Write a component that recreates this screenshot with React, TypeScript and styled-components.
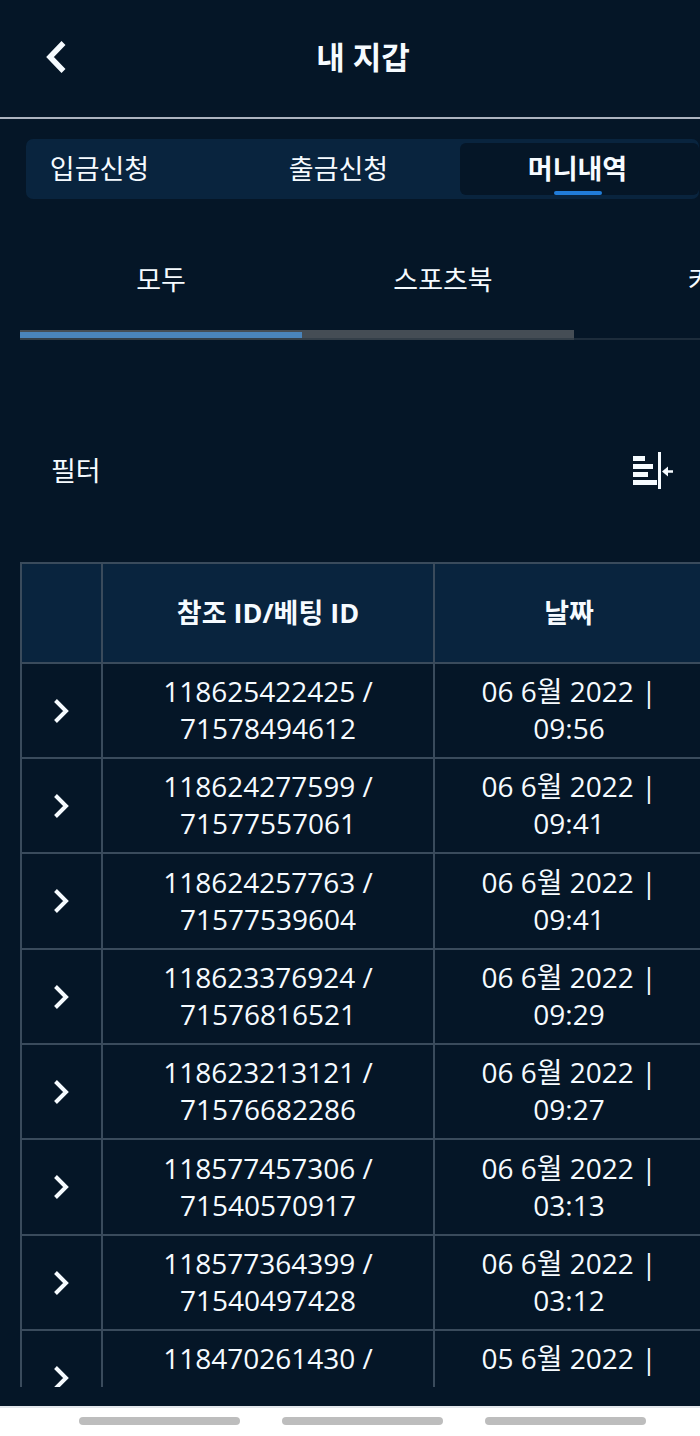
import React from "react";
import styled, { createGlobalStyle, css } from "styled-components";

const GlobalStyle = createGlobalStyle`
  * { box-sizing: border-box; }
  html, body, #root { height: 100%; }
  body {
    margin: 0;
    background: #051627;
    color: #f6fbff;
    font-family: "Open Sans", "Noto Sans CJK KR", sans-serif;
    font-size: 27px;
  }
  button { font: inherit; color: inherit; background: none; border: 0; padding: 0; }
`;

const Page = styled.div`
  height: 100vh;
  display: flex;
  flex-direction: column;
  overflow: hidden;
`;

const Header = styled.header`
  flex: none;
  display: grid;
  grid-template-columns: 1fr auto 1fr;
  align-items: center;
  height: 119px;
  padding: 0 20px 3px 46px;
  border-bottom: 2px solid #adb4c0;
`;

const BackButton = styled.button`
  display: flex;
  justify-self: start;
`;

const Title = styled.h1`
  margin: 0;
  font-size: 31px;
  line-height: 40px;
  font-weight: 700;
`;

const SegmentBar = styled.nav`
  flex: none;
  display: flex;
  justify-content: flex-end;
  height: 60px;
  margin: 20px 1px 0 26px;
  padding: 4px 0;
  border-radius: 7px;
  background: #09243e;
  overflow: hidden;
`;

const Segment = styled.button<{ $active?: boolean }>`
  flex: none;
  display: flex;
  flex-direction: column;
  align-items: center;
  justify-content: flex-end;
  width: 239px;
  padding-right: 4px;
  line-height: 40px;
  ${(p) =>
    p.$active &&
    css`
      font-weight: 700;
      border-radius: 6px;
      background: #051627;
    `}
`;

const Marker = styled.span<{ $active?: boolean }>`
  width: 48px;
  height: 4px;
  margin-top: 2px;
  border-radius: 2px;
  background: ${(p) => (p.$active ? "#217cd8" : "transparent")};
`;

const FilterTabs = styled.nav`
  flex: none;
  display: flex;
  height: 141px;
  margin-left: 20px;
  border-bottom: 2px solid #1d2c3b;
  overflow: hidden;
`;

const FilterTab = styled.button`
  flex: 0 0 282px;
  padding-top: 22px;
  line-height: 40px;
`;

const ScrollTrack = styled.div`
  flex: none;
  display: flex;
  width: 554px;
  height: 10px;
  margin: -10px 0 0 20px;
  border-top: 2px solid #454d55;
  border-bottom: 2px solid #343f49;
  background: #454d55;
`;

const ScrollFill = styled.div`
  width: 282px;
  background: #4a84bb;
`;

const FilterRow = styled.div`
  flex: none;
  display: flex;
  align-items: center;
  justify-content: space-between;
  height: 60px;
  margin: 101px 27px 0 51px;
`;

const FilterLabel = styled.span`
  line-height: 40px;
`;

const IconButton = styled.button`
  display: flex;
`;

const TableArea = styled.main`
  flex: 1;
  min-height: 0;
  margin: 61px 0 19px 20px;
  overflow: hidden;
`;

const Table = styled.table`
  width: 100%;
  min-width: 683px;
  table-layout: fixed;
  border-collapse: separate;
  border-spacing: 0;
  border-top: 2px solid #3a4b5c;
  border-left: 2px solid #3a4b5c;
`;

const Col = styled.col<{ $width?: number }>`
  ${(p) => p.$width && `width: ${p.$width}px;`}
`;

const HeadCell = styled.th<{ $last?: boolean }>`
  height: 100px;
  padding: 0 0 2px;
  line-height: 37px;
  font-weight: 700;
  background: #09243e;
  border-bottom: 2px solid #3a4b5c;
  border-right: ${(p) => (p.$last ? 0 : 2)}px solid #3a4b5c;
`;

const Row = styled.tr`
  height: 95px;
  &:nth-child(3n) {
    height: 96px;
  }
`;

const Cell = styled.td<{ $last?: boolean }>`
  padding: 0;
  font-size: 28px;
  line-height: 37px;
  text-align: center;
  border-bottom: 2px solid #3a4b5c;
  border-right: ${(p) => (p.$last ? 0 : 2)}px solid #3a4b5c;
`;

const Lines = styled.div`
  min-height: 74px;
  margin-bottom: 1px;
`;

const ExpandButton = styled.button`
  display: flex;
  margin: 0 auto;
`;

const SystemNav = styled.footer`
  flex: none;
  display: flex;
  justify-content: center;
  gap: 42px;
  height: 30px;
  padding: 9px 0 0 25px;
  border-top: 2px solid #e4e8ec;
  background: #ffffff;
`;

const NavPill = styled.div`
  width: 161px;
  height: 8px;
  border-radius: 4px;
  background: #bdbdbd;
`;

const rows = [
  ["118625422425", "71578494612", "06 6월 2022", "09:56"],
  ["118624277599", "71577557061", "06 6월 2022", "09:41"],
  ["118624257763", "71577539604", "06 6월 2022", "09:41"],
  ["118623376924", "71576816521", "06 6월 2022", "09:29"],
  ["118623213121", "71576682286", "06 6월 2022", "09:27"],
  ["118577457306", "71540570917", "06 6월 2022", "03:13"],
  ["118577364399", "71540497428", "06 6월 2022", "03:12"],
  ["118470261430", "", "05 6월 2022", ""],
];

const segments = ["입금신청", "출금신청", "머니내역"];

export default function App() {
  return (
    <Page>
      <GlobalStyle />
      <Header>
        <BackButton aria-label="뒤로">
          <svg width="20" height="32" viewBox="0 0 20 32" fill="none" stroke="#f6fbff" strokeWidth="5.5">
            <path d="M17.500 2 4 16l13.500 14" />
          </svg>
        </BackButton>
        <Title>내 지갑</Title>
      </Header>
      <SegmentBar>
        {segments.map((label, i) => (
          <Segment key={label} $active={i === 2}>
            {label}
            <Marker $active={i === 2} />
          </Segment>
        ))}
      </SegmentBar>
      <FilterTabs>
        <FilterTab>모두</FilterTab>
        <FilterTab>스포츠북</FilterTab>
        <FilterTab>카지노</FilterTab>
      </FilterTabs>
      <ScrollTrack>
        <ScrollFill />
      </ScrollTrack>
      <FilterRow>
        <FilterLabel>필터</FilterLabel>
        <IconButton aria-label="필터 열기">
          <svg width="41" height="38" viewBox="0 0 41 38" fill="#f6fbff">
            <path d="M1 4h12v5H1zM1 12h20v5H1zM1 20h15v5H1zM1 28h24v5H1zM26 0h3v37h-3z" />
            <path d="M30 19.500l6-5v3.800h5v2.400h-5v3.800z" />
          </svg>
        </IconButton>
      </FilterRow>
      <TableArea>
        <Table>
          <colgroup>
            <Col $width={81} />
            <Col $width={332} />
            <Col />
          </colgroup>
          <thead>
            <tr>
              <HeadCell />
              <HeadCell>참조 ID/베팅 ID</HeadCell>
              <HeadCell $last>날짜</HeadCell>
            </tr>
          </thead>
          <tbody>
            {rows.map(([reference, bet, date, time]) => (
              <Row key={reference}>
                <Cell>
                  <ExpandButton aria-label="상세 보기">
                    <svg width="18" height="26" viewBox="0 0 18 26" fill="none" stroke="#f6fbff" strokeWidth="4">
                      <path d="M2.500 2.500 13 13 2.500 23.500" />
                    </svg>
                  </ExpandButton>
                </Cell>
                <Cell>
                  <Lines>
                    {reference} /<br />
                    {bet}
                  </Lines>
                </Cell>
                <Cell $last>
                  <Lines>
                    {date} |<br />
                    {time}
                  </Lines>
                </Cell>
              </Row>
            ))}
          </tbody>
        </Table>
      </TableArea>
      <SystemNav>
        <NavPill />
        <NavPill />
        <NavPill />
      </SystemNav>
    </Page>
  );
}
